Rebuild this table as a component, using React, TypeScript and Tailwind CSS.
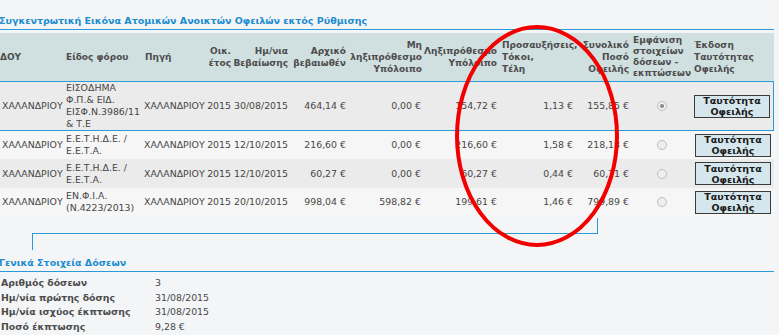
import React from "react";

const cols = "grid-cols-[64px_79px_63px_27px_57px_58px_75px_76px_76px_56px_61px_82px]";

function Radio({ checked }: { checked?: boolean }) {
  return (
    <div className="w-[10px] h-[10px] rounded-full border border-[#bdbdbd] bg-[#eeeeee] flex items-center justify-center">
      {checked && <div className="w-[4px] h-[4px] rounded-full bg-[#8a8a8a]" />}
    </div>
  );
}

function Btn() {
  return (
    <div className="w-[76px] h-[23px] border border-[#3c3c3c] bg-[#d5e6ec] flex flex-col items-center justify-center font-bold text-[#1a1a1a] text-[9.5px] leading-[11px]">
      <span>Ταυτότητα</span>
      <span>Οφειλής</span>
    </div>
  );
}

type Row = {
  tax: React.ReactNode;
  year: string;
  date: string;
  initial: string;
  nonOver: string;
  over: string;
  fees: string;
  total: string;
};

const rows: Row[] = [
  {
    tax: (
      <>
        ΕΙΣΟΔΗΜΑ<br />Φ.Π.& ΕΙΔ.<br />ΕΙΣΦ.Ν.3986/11<br />& Τ.Ε
      </>
    ),
    year: "2015",
    date: "30/08/2015",
    initial: "464,14 €",
    nonOver: "0,00 €",
    over: "154,72 €",
    fees: "1,13 €",
    total: "155,85 €",
  },
  {
    tax: (
      <>
        Ε.Ε.Τ.Η.Δ.Ε. /<br />Ε.Ε.Τ.Α.
      </>
    ),
    year: "2015",
    date: "12/10/2015",
    initial: "216,60 €",
    nonOver: "0,00 €",
    over: "216,60 €",
    fees: "1,58 €",
    total: "218,18 €",
  },
  {
    tax: (
      <>
        Ε.Ε.Τ.Η.Δ.Ε. /<br />Ε.Ε.Τ.Α.
      </>
    ),
    year: "2015",
    date: "12/10/2015",
    initial: "60,27 €",
    nonOver: "0,00 €",
    over: "60,27 €",
    fees: "0,44 €",
    total: "60,71 €",
  },
  {
    tax: (
      <>
        ΕΝ.Φ.Ι.Α.<br />(Ν.4223/2013)
      </>
    ),
    year: "2015",
    date: "20/10/2015",
    initial: "998,04 €",
    nonOver: "598,82 €",
    over: "199,61 €",
    fees: "1,46 €",
    total: "799,89 €",
  },
];

export default function App() {
  return (
    <div className="relative w-[779px] h-[335px] overflow-hidden bg-[#f4f5f7] font-['DejaVu_Sans','Verdana',sans-serif] text-[9.4px] leading-[12px] text-[#464646]">
      <div className="w-[774px] pt-[15px]">
        {/* Title */}
        <div className="ml-[-1px] font-bold text-[#1b8dd0] text-[9.5px] leading-[12px] whitespace-nowrap">
          Συγκεντρωτική Εικόνα Ατομικών Ανοικτών Οφειλών εκτός Ρύθμισης
        </div>
        <div className="mt-[2px] h-[1px] bg-[#2b9ad6]" />

        {/* Header */}
        <div className={`mt-[3px] grid ${cols} h-[48px] bg-[#d0dfe0] font-bold text-[#4d4d4d] text-[9px] whitespace-nowrap`}>
          <div className="flex items-center pl-[0px]">ΔΟΥ</div>
          <div className="flex items-center pl-[2px]">Είδος φόρου</div>
          <div className="flex items-center pl-[2px]">Πηγή</div>
          <div className="flex items-center justify-end text-right pr-[2px]">
            <span>Οικ.<br />έτος</span>
          </div>
          <div className="flex items-center justify-end text-right pr-[2px]">
            <span>Ημ/νια<br />Βεβαίωσης</span>
          </div>
          <div className="flex items-center justify-end text-right pr-[2px]">
            <span>Αρχικό<br />βεβαιωθέν</span>
          </div>
          <div className="flex items-center justify-end text-right pr-[1px]">
            <span>Μη<br />ληξιπρόθεσμο<br />Υπόλοιπο</span>
          </div>
          <div className="flex items-center justify-end text-right pr-[2px]">
            <span>Ληξιπρόθεσμο<br />Υπόλοιπο</span>
          </div>
          <div className="flex items-center pl-[3px]">
            <span>Προσαυξήσεις,<br />Τόκοι,<br />Τέλη</span>
          </div>
          <div className="flex items-center justify-end text-right pr-[2px]">
            <span>Συνολικό<br />Ποσό<br />Οφειλής</span>
          </div>
          <div className="flex items-center pl-[2px] leading-[11px]">
            <span>Εμφάνιση<br />στοιχείων<br />δόσεων -<br />εκπτώσεων</span>
          </div>
          <div className="flex items-center pl-[2px]">
            <span>Έκδοση<br />Ταυτότητας<br />Οφειλής</span>
          </div>
        </div>

        {/* Rows */}
        {rows.map((r, i) => {
          const selected = i === 0;
          const bg = selected ? "bg-[#ebebeb]" : i % 2 === 1 ? "bg-[#f6f6f6]" : "bg-[#ebebeb]";
          const border = selected ? "border border-[#2b9ad6] border-l-0 h-[50px]" : i === 2 ? "h-[29px]" : "h-[28px]";
          return (
            <div key={i} className={`grid ${cols} ${bg} ${border} whitespace-nowrap`}>
              <div className="flex items-center pl-[2px]">ΧΑΛΑΝΔΡΙΟΥ</div>
              <div className="flex items-center pl-[2px]">
                <span>{r.tax}</span>
              </div>
              <div className="flex items-center pl-[1px]">ΧΑΛΑΝΔΡΙΟΥ</div>
              <div className="flex items-center justify-end pr-[2px]">{r.year}</div>
              <div className="flex items-center justify-end pr-[2px]">{r.date}</div>
              <div className="flex items-center justify-end pr-[2px]">{r.initial}</div>
              <div className="flex items-center justify-end pr-[2px]">{r.nonOver}</div>
              <div className="flex items-center justify-end pr-[2px]">{r.over}</div>
              <div className="flex items-center justify-end pr-[2px]">{r.fees}</div>
              <div className="flex items-center justify-end pr-[2px]">{r.total}</div>
              <div className="flex items-center justify-center pl-[0px]">
                <Radio checked={selected} />
              </div>
              <div className={`flex items-center ${selected ? "pl-[2px]" : "pl-[3px]"}`}>
                <Btn />
              </div>
            </div>
          );
        })}

        {/* Connector */}
        <div className="mt-[2px] ml-[32px] w-[566px] h-[16px] border-r border-b border-[#2b9ad6]" />
        <div className="ml-[32px] w-[1px] h-[16px] bg-[#2b9ad6]" />

        {/* Section 2 */}
        <div className="mt-[7px] ml-[-1px] font-bold text-[#1b8dd0] text-[9.5px] leading-[12px] whitespace-nowrap">
          Γενικά Στοιχεία Δόσεων
        </div>
        <div className="mt-[2px] h-[1px] bg-[#2b9ad6]" />

        <div className="mt-[4px] flex flex-col leading-[14.5px]">
          {[
            ["Αριθμός δόσεων", "3"],
            ["Ημ/νία πρώτης δόσης", "31/08/2015"],
            ["Ημ/νία ισχύος έκπτωσης", "31/08/2015"],
            ["Ποσό έκπτωσης", "9,28 €"],
          ].map(([k, v]) => (
            <div key={k} className="flex whitespace-nowrap">
              <div className="w-[155px] pl-[1px] font-bold text-[#4d4d4d]">{k}</div>
              <div>{v}</div>
            </div>
          ))}
        </div>
      </div>

      {/* Red annotation ellipse */}
      <svg className="absolute left-0 top-0 pointer-events-none" width="779" height="335">
        <ellipse cx="537" cy="136" rx="80" ry="109" fill="none" stroke="#f20000" strokeWidth="4" />
      </svg>
    </div>
  );
}
